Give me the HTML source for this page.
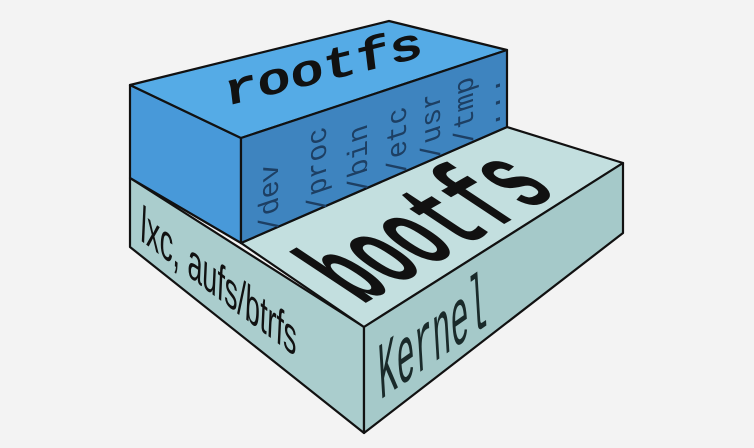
<!DOCTYPE html>
<html><head><meta charset="utf-8"><style>
html,body{margin:0;padding:0;width:754px;height:448px;overflow:hidden;background:#f3f3f3}
svg{display:block}
</style></head><body>
<svg width="754" height="448" viewBox="0 0 754 448" xmlns="http://www.w3.org/2000/svg">
<rect width="754" height="448" fill="#f3f3f3"/>
<g stroke="#111" stroke-width="2.2" stroke-linejoin="round">
<polygon points="130,178 364,327 364,433 130,247" fill="#aacdcd"/>
<polygon points="241,243 507,127 623,163 364,327" fill="#c3dfdf"/>
<polygon points="364,327 623,163 623,233 364,433" fill="#a5c9c9"/>
<polygon points="130,85 241,138 241,243 130,178" fill="#4899d9"/>
<polygon points="130,85 389,21 507,50 241,138" fill="#55abe6"/>
<polygon points="241,138 507,50 507,127 241,243" fill="#3e84bf"/>
</g>
<g font-family="Liberation Mono, monospace">
<text transform="matrix(1,-0.25,0.1,0.82,226,106)" font-size="55" font-weight="bold" fill="#111" textLength="198" lengthAdjust="spacingAndGlyphs">rootfs</text>
<g fill="#1d3f63" font-size="28">
<text transform="matrix(0,-1,1,-0.33,278,229)">/dev</text>
<text transform="matrix(0,-1,1,-0.33,326,209)">/proc</text>
<text transform="matrix(0,-1,1,-0.33,367,190)">/bin</text>
<text transform="matrix(0,-1,1,-0.33,406,172)">/etc</text>
<text transform="matrix(0,-1,1,-0.33,440,157)">/usr</text>
<text transform="matrix(0,-1,1,-0.33,473,142)">/tmp</text>
<text transform="matrix(0,-1,1,-0.33,500,127)">...</text>
</g>
<text transform="matrix(0.86,-0.49,1.66,1.1,362,305)" font-size="64" font-weight="bold" fill="#111">bootfs</text>
<text transform="matrix(1,-0.7,0.12,2.0,380,400)" font-size="40" fill="#1a2a2a" textLength="108" lengthAdjust="spacingAndGlyphs">Kernel</text>
</g>
<text transform="matrix(0.8,0.6,-0.05,1.1,140,240)" font-family="Liberation Sans Narrow, Liberation Sans, sans-serif" font-size="46" fill="#111" textLength="195" lengthAdjust="spacingAndGlyphs">lxc, aufs/btrfs</text>
</svg>
</body></html>
